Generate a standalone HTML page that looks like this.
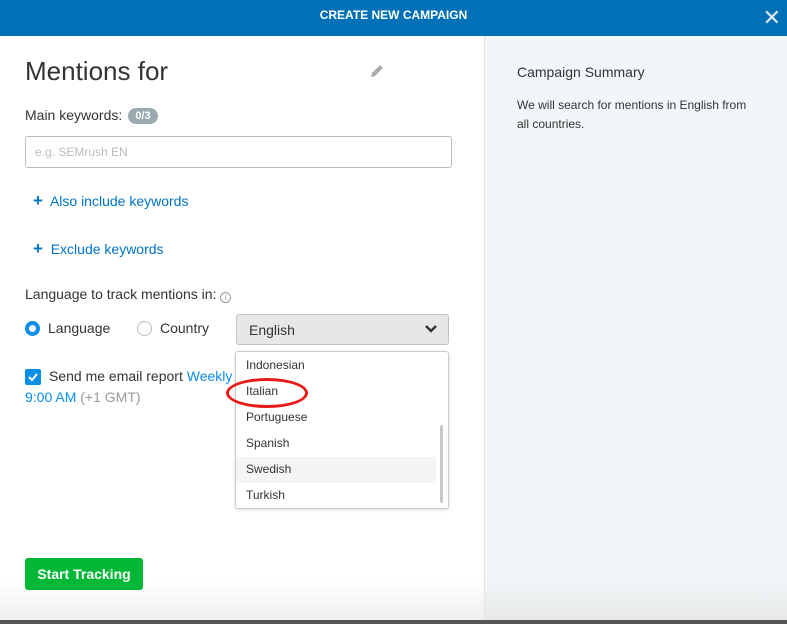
<!DOCTYPE html>
<html><head><style>
*{margin:0;padding:0;box-sizing:border-box}
body{width:787px;height:624px;overflow:hidden;font-family:"Liberation Sans",sans-serif;color:#333;background:#fff;position:relative}
.hdr{position:absolute;left:0;top:0;width:787px;height:36px;background:#0071b6;color:#fff;font-size:12px;font-weight:bold;text-align:center;line-height:31px}
.x{position:absolute;right:6px;top:2px;font-size:22px;color:#dfe8f0;font-weight:normal}
.left{position:absolute;left:0;top:36px;width:484px;height:584px;background:linear-gradient(#fff 0,#fff 545px,#efefef 584px)}
.right{position:absolute;left:484px;top:36px;width:303px;height:584px;background:linear-gradient(#f3f6f8 0,#f3f6f8 545px,#e6e8e9 584px);border-left:1px solid #e2e4e6}
.bot{position:absolute;left:0;top:620px;width:787px;height:4px;background:#555}
.a{position:absolute;white-space:nowrap}
</style></head><body>
<div class="hdr">CREATE NEW CAMPAIGN<span class="x">✕</span></div>
<div class="left"></div>
<div class="right"></div>
<div class="bot"></div>
<div class="a" style="left:25px;top:56px;font-size:26px;color:#333">Mentions for</div>
<svg class="a" style="left:369px;top:63px" width="16" height="16" viewBox="0 0 16 16"><path d="M2 14l1-4 8-8 3 3-8 8z" fill="#aaa"/></svg>
<div class="a" style="left:25px;top:107px;font-size:14px">Main keywords:</div>
<div class="a" style="left:128px;top:108px;width:30px;height:16px;border-radius:8px;background:#9aa9b0;color:#fff;font-size:11px;font-weight:bold;text-align:center;line-height:16px">0/3</div>
<div class="a" style="left:25px;top:136px;width:427px;height:32px;border:1px solid #bbb;border-radius:3px;font-size:12px;color:#bbb;padding:8px 9px">e.g. SEMrush EN</div>
<div class="a" style="left:33px;top:191px;font-size:14px;color:#0073c6"><b style="font-size:17px">+</b>&nbsp; Also include keywords</div>
<div class="a" style="left:33px;top:239px;font-size:14px;color:#0073c6"><b style="font-size:17px">+</b>&nbsp; Exclude keywords</div>
<div class="a" style="left:25px;top:286px;font-size:14px">Language to track mentions in: <span style="display:inline-block;width:11px;height:11px;border:1px solid #999;border-radius:50%;font-size:8px;color:#999;text-align:center;line-height:9px;vertical-align:-1px">i</span></div>
<div class="a" style="left:25px;top:321px;width:15px;height:15px;border-radius:50%;border:4px solid #0a8ee8"></div>
<div class="a" style="left:48px;top:320px;font-size:14px">Language</div>
<div class="a" style="left:137px;top:321px;width:15px;height:15px;border-radius:50%;border:1px solid #bbb"></div>
<div class="a" style="left:160px;top:320px;font-size:14px">Country</div>
<div class="a" style="left:236px;top:314px;width:213px;height:31px;background:#e7e7e7;border:1px solid #c2c2c2;border-radius:3px;font-size:14px;padding:7px 12px">English</div>
<svg class="a" style="left:424px;top:323px" width="14" height="12" viewBox="0 0 14 12"><path d="M2 3l5 5 5-5" stroke="#333" stroke-width="2.5" fill="none"/></svg>
<div class="a" style="left:235px;top:351px;width:214px;height:158px;background:#fff;border:1px solid #ccc;border-radius:3px;box-shadow:0 1px 3px rgba(0,0,0,.15)"></div>
<div class="a" style="left:236px;top:457px;width:200px;height:26px;background:#f4f4f4"></div>
<div class="a" style="left:440px;top:425px;width:3px;height:78px;background:#c8c8c8;border-radius:2px"></div>
<div class="a" style="left:246px;top:352px;font-size:12px;line-height:26px;color:#333">Indonesian<br>Italian<br>Portuguese<br>Spanish<br>Swedish<br>Turkish</div>
<div class="a" style="left:226px;top:378px;width:82px;height:30px;border:3px solid #e41b17;border-radius:50%"></div>
<div class="a" style="left:25px;top:369px;width:16px;height:16px;background:#0a8ee8;border-radius:2px"></div>
<svg class="a" style="left:25px;top:369px" width="16" height="16"><path d="M4 8l3 3 5-6" stroke="#fff" stroke-width="2" fill="none"/></svg>
<div class="a" style="left:49px;top:368px;font-size:14px">Send me email report <span style="color:#0a8ee8">Weekly</span></div>
<div class="a" style="left:25px;top:389px;font-size:14px;color:#0a8ee8">9:00 AM <span style="color:#999">(+1 GMT)</span></div>
<div class="a" style="left:25px;top:558px;width:118px;height:32px;background:#00b835;border-radius:3px;color:#fff;font-size:14px;font-weight:bold;text-align:center;line-height:32px">Start Tracking</div>
<div class="a" style="left:517px;top:64px;font-size:14px">Campaign Summary</div>
<div class="a" style="left:517px;top:96px;font-size:12px;line-height:19px;white-space:normal;width:240px">We will search for mentions in English from all countries.</div>
</body></html>
